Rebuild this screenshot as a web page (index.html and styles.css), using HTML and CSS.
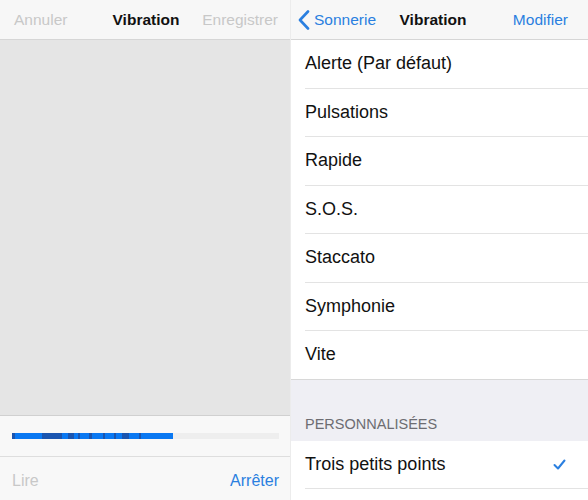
FILE: index.html
```html
<!doctype html>
<html lang="fr">
<head>
  <title>Vibration</title>
  <meta charset="UTF-8">
  <link rel="stylesheet" href="styles.css">
</head>
<body>
  <div class="pane record-pane">
    <div class="nav-bar">
      <span class="nav-btn disabled">Annuler</span>
      <span class="nav-title">Vibration</span>
      <span class="nav-btn disabled right">Enregistrer</span>
    </div>
    <div class="touch-area"></div>
    <div class="timeline">
      <div class="track"><div class="fill"></div></div>
    </div>
    <div class="toolbar">
      <span class="nav-btn disabled">Lire</span>
      <span class="nav-btn">Arrêter</span>
    </div>
  </div>
  <div class="pane list-pane">
    <div class="nav-bar">
      <span class="nav-btn back">
        <svg width="12" height="20" viewBox="0 0 12 20"><path d="M10 1.5 L2 10 L10 18.5" fill="none" stroke="currentColor" stroke-width="2.6" stroke-linecap="round" stroke-linejoin="round"/></svg>
        Sonnerie
      </span>
      <span class="nav-title">Vibration</span>
      <span class="nav-btn right">Modifier</span>
    </div>
    <ul class="list">
      <li>Alerte (Par défaut)</li>
      <li>Pulsations</li>
      <li>Rapide</li>
      <li>S.O.S.</li>
      <li>Staccato</li>
      <li>Symphonie</li>
      <li class="last">Vite</li>
    </ul>
    <div class="section-header">PERSONNALISÉES</div>
    <ul class="list">
      <li class="checked">Trois petits points
        <svg class="check" width="13" height="11" viewBox="0 0 13 11"><path d="M1.5 6 L5 9.5 L11.5 1.5" fill="none" stroke="currentColor" stroke-width="2" stroke-linecap="round" stroke-linejoin="round"/></svg>
      </li>
    </ul>
  </div>
</body>
</html>
```

FILE: styles.css
```css
body {
  margin: 0;
  font-family: 'Liberation Sans', Arial, sans-serif;
  display: flex;
  height: 500px;
  overflow: hidden;
  background: #fff;
}
.pane {
  display: flex;
  flex-direction: column;
  height: 500px;
}
.record-pane {
  width: 290px;
  background: #f8f8f8;
}
.list-pane {
  flex: 1;
  border-left: 1px solid #ececec;
  background: #fff;
}
.nav-bar {
  height: 39px;
  border-bottom: 1px solid #d6d6d6;
  background: #f7f7f7;
  display: grid;
  grid-template-columns: 1fr auto 1fr;
  align-items: center;
  padding: 0 12px 0 14px;
  flex-shrink: 0;
}
.list-pane .nav-bar {
  padding: 0 20px 0 7px;
}
.nav-title {
  font-size: 15.5px;
  font-weight: 700;
  color: #111;
}
.nav-btn {
  font-size: 15.5px;
  color: #2a7fe0;
  display: flex;
  align-items: center;
}
.nav-btn.right {
  justify-self: end;
}
.nav-btn.disabled {
  color: #c8c8c8;
}
.back svg {
  margin-right: 4px;
}
.touch-area {
  flex: 1;
  background: #e5e5e5;
  border-bottom: 1px solid #d0d0d0;
}
.timeline {
  height: 40px;
  display: flex;
  align-items: center;
  padding: 0 11px 0 12px;
  border-bottom: 1px solid #dedede;
  flex-shrink: 0;
}
.track {
  flex: 1;
  height: 6px;
  background: #eeeeee;
}
.fill {
  width: 161px;
  height: 100%;
  background:
    linear-gradient(90deg,
      #1a55b0 0 3px, transparent 3px 30px,
      #1a55b0 30px 50px, transparent 50px 56px,
      #1a55b0 56px 62px, transparent 62px 66px,
      #1a55b0 66px 68px, transparent 68px 77px,
      #1a55b0 77px 80px, transparent 80px 91px,
      #1a55b0 91px 93px, transparent 93px 102px,
      #1a55b0 102px 104px, transparent 104px 110px,
      #1a55b0 110px 117px, transparent 117px 127px,
      #1a55b0 127px 129px, transparent 129px),
    #0a78f2;
}
.toolbar {
  height: 43px;
  display: flex;
  align-items: center;
  justify-content: space-between;
  padding: 5px 11px 0 12px;
  flex-shrink: 0;
  box-sizing: border-box;
}
.toolbar .nav-btn {
  font-size: 16px;
}
.list {
  list-style: none;
  margin: 0;
  padding: 0;
}
.list li {
  height: 47.5px;
  margin-left: 14px;
  padding-right: 20px;
  border-bottom: 1px solid #e3e3e3;
  display: flex;
  align-items: center;
  justify-content: space-between;
  font-size: 18px;
  color: #111;
}
.list li.last {
  margin-left: 0;
  padding-left: 14px;
  border-bottom-color: #d8d8d8;
}
.section-header {
  background: #efeff4;
  height: 61px;
  box-sizing: border-box;
  padding: 0 14px 9px;
  display: flex;
  align-items: flex-end;
  font-size: 14.5px;
  color: #6d6d72;
}
.check {
  color: #2a7fe0;
  margin-right: 2px;
}
```
